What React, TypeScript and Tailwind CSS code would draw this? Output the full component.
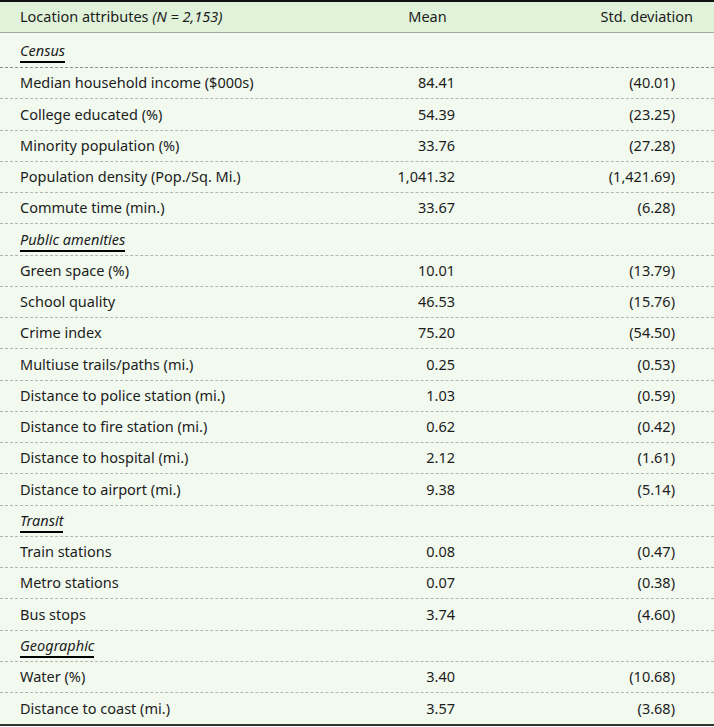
type Row = { label: string; mean?: string; sd?: string; section?: boolean };

const rows: Row[] = [
  { label: "Median household income ($000s)", mean: "84.41", sd: "(40.01)" },
  { label: "College educated (%)", mean: "54.39", sd: "(23.25)" },
  { label: "Minority population (%)", mean: "33.76", sd: "(27.28)" },
  { label: "Population density (Pop./Sq. Mi.)", mean: "1,041.32", sd: "(1,421.69)" },
  { label: "Commute time (min.)", mean: "33.67", sd: "(6.28)" },
  { label: "Public amenities", section: true },
  { label: "Green space (%)", mean: "10.01", sd: "(13.79)" },
  { label: "School quality", mean: "46.53", sd: "(15.76)" },
  { label: "Crime index", mean: "75.20", sd: "(54.50)" },
  { label: "Multiuse trails/paths (mi.)", mean: "0.25", sd: "(0.53)" },
  { label: "Distance to police station (mi.)", mean: "1.03", sd: "(0.59)" },
  { label: "Distance to fire station (mi.)", mean: "0.62", sd: "(0.42)" },
  { label: "Distance to hospital (mi.)", mean: "2.12", sd: "(1.61)" },
  { label: "Distance to airport (mi.)", mean: "9.38", sd: "(5.14)" },
  { label: "Transit", section: true },
  { label: "Train stations", mean: "0.08", sd: "(0.47)" },
  { label: "Metro stations", mean: "0.07", sd: "(0.38)" },
  { label: "Bus stops", mean: "3.74", sd: "(4.60)" },
  { label: "Geographic", section: true },
  { label: "Water (%)", mean: "3.40", sd: "(10.68)" },
  { label: "Distance to coast (mi.)", mean: "3.57", sd: "(3.68)" },
];

const cols = "grid grid-cols-[370px_115px_1fr]";

function SectionLabel({ children }: { children: React.ReactNode }) {
  return <span className="border-b-2 border-black pb-px italic leading-[18px]">{children}</span>;
}

export default function App() {
  return (
    <div className="w-[714px] bg-white font-['Noto_Sans',sans-serif] text-[14.5px] text-[#1c1c1c]">
      <div className="border-t-2 border-b-2 border-t-[#111] border-b-[#333] bg-[#f2faf0]">
        {/* header */}
        <div className={`${cols} h-[31px] items-center border-b border-[#a5a5a5] bg-[#e1f2da]`}>
          <div className="pl-5">
            Location attributes <span className="italic">(N = 2,153)</span>
          </div>
          <div className="text-center">Mean</div>
          <div className="pr-[21px] text-right">Std. deviation</div>
        </div>

        <div className={`${cols} h-[35px] items-end border-b border-dashed border-[#8c8c8c] pb-[5px]`}>
          <div className="pl-5">
            <SectionLabel>Census</SectionLabel>
          </div>
        </div>

        {rows.map((r, i) => {
          const last = i === rows.length - 1;
          const line = last ? "" : "border-b border-dashed border-[#b4b4b4]";
          if (r.section) {
            return (
              <div key={r.label} className={`${cols} h-[31.25px] items-end pb-[4px] ${line}`}>
                <div className="pl-5">
                  <SectionLabel>{r.label}</SectionLabel>
                </div>
              </div>
            );
          }
          return (
            <div key={r.label} className={`${cols} h-[31.25px] items-center ${line}`}>
              <div className="pl-5">{r.label}</div>
              <div className="pr-[30px] text-right">{r.mean}</div>
              <div className="pr-[39px] text-right">{r.sd}</div>
            </div>
          );
        })}
      </div>
    </div>
  );
}
